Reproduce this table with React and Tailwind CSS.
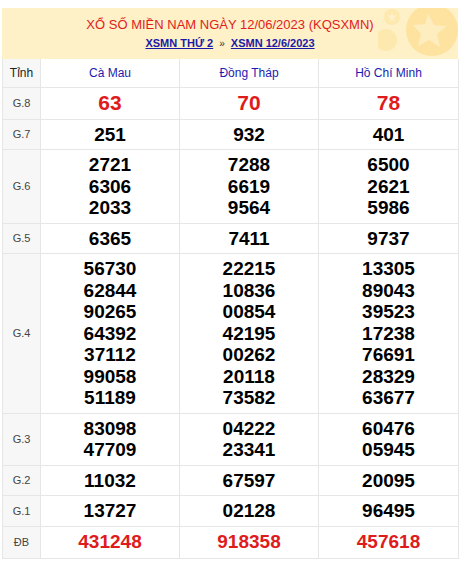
import React from "react";

const rows = [
  { label: "G.8", vals: [["63"], ["70"], ["78"]], kind: "g8" },
  { label: "G.7", vals: [["251"], ["932"], ["401"]] },
  { label: "G.6", vals: [["2721", "6306", "2033"], ["7288", "6619", "9564"], ["6500", "2621", "5986"]] },
  { label: "G.5", vals: [["6365"], ["7411"], ["9737"]] },
  {
    label: "G.4",
    vals: [
      ["56730", "62844", "90265", "64392", "37112", "99058", "51189"],
      ["22215", "10836", "00854", "42195", "00262", "20118", "73582"],
      ["13305", "89043", "39523", "17238", "76691", "28329", "63677"],
    ],
  },
  { label: "G.3", vals: [["83098", "47709"], ["04222", "23341"], ["60476", "05945"]] },
  { label: "G.2", vals: [["11032"], ["67597"], ["20095"]] },
  { label: "G.1", vals: [["13727"], ["02128"], ["96495"]] },
  { label: "ĐB", vals: [["431248"], ["918358"], ["457618"]], kind: "db" },
];

function Deco() {
  return (
    <svg className="absolute right-0 top-0" width="80" height="50" viewBox="0 0 80 50">
      <circle cx="14" cy="9" r="8" fill="#fde7a8" opacity="0.8" />
      <path d="M14 4 L15.3 7.5 L19 7.6 L16 9.8 L17.1 13.4 L14 11.3 L10.9 13.4 L12 9.8 L9 7.6 L12.7 7.5 Z" fill="#fef0c9" />
      <circle cx="8" cy="32" r="11" fill="#fde7a8" opacity="0.8" />
      <circle cx="54" cy="22" r="26" fill="#fde39f" />
      <path d="M50 6 L56 17 L69 18 L59 26 L62 39 L51 32 L40 38 L43 26 L35 17 L47 16 Z" fill="#fdedbf" />
    </svg>
  );
}

export default function App() {
  const font = { fontFamily: '"Liberation Sans", Arial, sans-serif' };
  return (
    <div className="w-[461px] h-[563px] bg-white" style={font}>
      <div className="pt-[8px] pl-[2px] w-[458px]">
        <div className="relative h-[51px] bg-[#fef0c7] flex flex-col items-center overflow-hidden">
          <Deco />
          <div className="relative mt-[9px] text-[13px] leading-[15px] text-[#e21c1c]">
            XỔ SỐ MIỀN NAM NGÀY 12/06/2023 (KQSXMN)
          </div>
          <div className="relative mt-[5px] text-[11px] leading-[13px] font-bold flex items-center gap-[6px]">
            <span className="underline text-[#1a1aa8]">XSMN THỨ 2</span>
            <span className="text-[#333] font-normal text-[10px]">»</span>
            <span className="underline text-[#1a1aa8]">XSMN 12/6/2023</span>
          </div>
        </div>
        <table className="w-[456px] border-collapse table-fixed">
          <colgroup>
            <col className="w-[38px]" />
            <col className="w-[139px]" />
            <col className="w-[139px]" />
            <col className="w-[140px]" />
          </colgroup>
          <thead>
            <tr className="h-[28px]">
              <th className="border border-[#e6e6e6] border-t-0 bg-[#f7f7f7] text-[12px] font-normal text-[#222]">Tỉnh</th>
              <th className="border border-[#e6e6e6] border-t-0 text-[12px] font-normal text-[#1c1cb0]">Cà Mau</th>
              <th className="border border-[#e6e6e6] border-t-0 text-[12px] font-normal text-[#1c1cb0]">Đồng Tháp</th>
              <th className="border border-[#e6e6e6] border-t-0 text-[12px] font-normal text-[#1c1cb0]">Hồ Chí Minh</th>
            </tr>
          </thead>
          <tbody>
            {rows.map((r) => (
              <tr key={r.label} className={r.kind ? "h-[32px]" : ""}>
                <td className="border border-[#e6e6e6] bg-[#f7f7f7] text-center text-[11px] text-[#444]">{r.label}</td>
                {r.vals.map((v, i) => (
                  <td
                    key={i}
                    className={
                      "border border-[#e6e6e6] text-center font-bold py-[4px] leading-[21.5px] " +
                      (r.kind === "g8"
                        ? "text-[21px] text-[#e01b1b]"
                        : r.kind === "db"
                        ? "text-[19px] text-[#e01b1b]"
                        : "text-[19px] text-black")
                    }
                  >
                    {v.map((n) => (
                      <div key={n}>{n}</div>
                    ))}
                  </td>
                ))}
              </tr>
            ))}
          </tbody>
        </table>
      </div>
    </div>
  );
}
